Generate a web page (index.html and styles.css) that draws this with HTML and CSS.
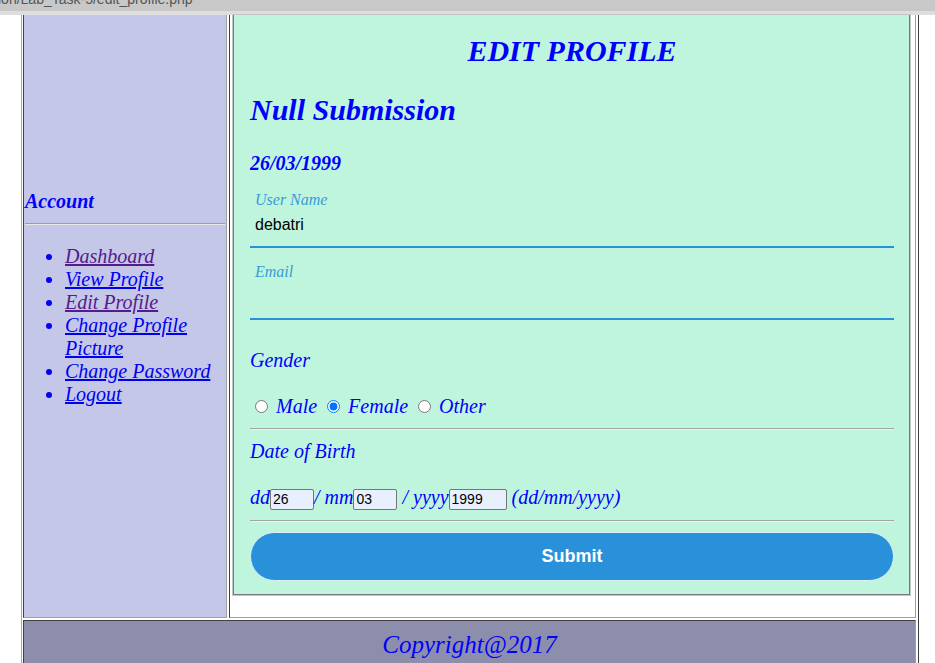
FILE: index.html
```html
<!DOCTYPE html>
<html lang="en">
<head>
<meta charset="utf-8">
<title>Edit Profile</title>
<link rel="stylesheet" href="styles.css">
</head>
<body>
<div class="urlbar"><div class="urltext">ion/Lab_Task-5/edit_profile.php</div></div>
<div class="urlstrip"></div>
<div class="page">
  <div class="frame">
    <aside class="cell side">
      <h4 class="side-title">Account</h4>
      <hr class="side-rule">
      <ul class="menu">
        <li><a href="#" class="visited">Dashboard</a></li>
        <li><a href="#">View Profile</a></li>
        <li><a href="#" class="visited">Edit Profile</a></li>
        <li><a href="#">Change Profile Picture</a></li>
        <li><a href="#">Change Password</a></li>
        <li><a href="#">Logout</a></li>
      </ul>
    </aside>
    <main class="cell content">
      <div class="panel">
        <h2 class="title">EDIT PROFILE</h2>
        <h2 class="null">Null Submission</h2>
        <h4 class="date">26/03/1999</h4>
        <div class="field first">
          <label class="flabel">User Name</label>
          <input class="finput" type="text" value="debatri">
        </div>
        <div class="field">
          <label class="flabel">Email</label>
          <input class="finput" type="text" value="">
        </div>
        <div class="gender">Gender</div>
        <div class="radios"><input type="radio" name="g" class="radio"> Male <input type="radio" name="g" class="radio" checked> Female <input type="radio" name="g" class="radio"> Other</div>
        <hr class="rule">
        <div class="dob">Date of Birth</div>
        <div class="daterow">dd<input class="dinput w44" type="text" value="26">/ mm<input class="dinput w44" type="text" value="03"> / yyyy<input class="dinput w58" type="text" value="1999"> (dd/mm/yyyy)</div>
        <hr class="rule">
        <button class="submit" type="button">Submit</button>
      </div>
    </main>
    <footer class="cell foot">Copyright@2017</footer>
  </div>
</div>
</body>
</html>
```
FILE: styles.css
```css
html, body {
  margin: 0;
  padding: 0;
  overflow: hidden;
  background: #ffffff;
}
body {
  width: 935px;
  height: 663px;
  font-family: "Liberation Serif", "Times New Roman", serif;
  font-size: 20px;
}
.urlbar {
  height: 11px;
  background: #c8c8c8;
  overflow: hidden;
}
.urltext {
  font-family: "Liberation Sans", Arial, sans-serif;
  font-size: 14px;
  line-height: 16px;
  color: #555555;
  margin: -9px 0 0 -2px;
  white-space: nowrap;
}
.urlstrip {
  height: 4px;
  background: #dedede;
}
.page {
  padding-left: 21px;
}
.frame {
  width: 898px;
  box-sizing: border-box;
  display: grid;
  grid-template-columns: 204px 687px;
  grid-template-rows: 603px 70px;
  gap: 2px;
  padding: 0 2px 2px 1px;
  border-left: 1px solid #a8a8a8;
  border-right: 1px solid #404040;
}
.cell {
  box-sizing: border-box;
  border-style: solid;
  border-width: 0 1px 1px 1px;
  border-color: #404040 #a0a0a0 #a0a0a0 #404040;
}
.side {
  background: #c4c7e8;
  padding: 175px 1px 0;
  color: #0000ff;
  font-style: italic;
}
.side-title {
  margin: 0;
  font-size: 20px;
  line-height: 23px;
  font-weight: bold;
}
.side-rule {
  margin: 10px 0 0;
  height: 0;
  border: none;
  border-top: 1px solid #9e9e9e;
  border-bottom: 1px solid #e6e6e6;
}
.menu {
  margin: 20px 0 0;
  padding-left: 40px;
  line-height: 23px;
}
.menu a {
  color: #0000ee;
  text-decoration: underline;
}
.menu a.visited {
  color: #551a8b;
}
.content {
  background: #ffffff;
  padding: 0 5px 0 3px;
}
.panel {
  display: flow-root;
  background: #bff5dc;
  border: 1px solid #7a7a7a;
  border-top: none;
  box-shadow: 0 0 0 1px #c4c4c4;
  padding: 0 15px 13px 16px;
  color: #0000ff;
  font-style: italic;
}
.title, .null {
  font-size: 30px;
  line-height: 34px;
  font-weight: bold;
  margin: 24px 0 0;
}
.title {
  text-align: center;
  margin-top: 19px;
}
.null {
  margin-top: 25px;
}
.date {
  font-size: 20px;
  line-height: 23px;
  font-weight: bold;
  margin: 25px 0 0;
}
.field {
  margin-top: 15px;
}
.field.first {
  margin-top: 16px;
}
.flabel {
  display: block;
  font-size: 16px;
  line-height: 18px;
  padding-left: 5px;
  color: #3b9ad9;
}
.finput {
  display: block;
  width: 100%;
  height: 39px;
  box-sizing: border-box;
  margin: 0;
  border: none;
  border-bottom: 2px solid #2891d8;
  background: transparent;
  padding: 7px 5px 12px;
  font-family: "Liberation Sans", Arial, sans-serif;
  font-size: 16px;
  line-height: 18px;
  font-style: normal;
  color: #000000;
  outline: none;
}
.gender {
  margin-top: 29px;
  line-height: 23px;
}
.radios {
  margin-top: 23px;
  line-height: 23px;
}
.radio {
  width: 13px;
  height: 13px;
  margin: 3px 3px 0 5px;
}
.rule {
  margin: 10px 0 0;
  height: 0;
  border: none;
  border-top: 1px solid #a3a3a3;
  border-bottom: 1px solid #e4f7ee;
}
.dob {
  margin-top: 10px;
  line-height: 23px;
}
.daterow {
  margin-top: 23px;
  height: 24px;
  line-height: 23px;
}
.dinput {
  box-sizing: border-box;
  height: 21px;
  margin: 0;
  padding: 0 2px;
  border: 1px solid #767676;
  border-radius: 2px;
  background: #e8f0fe;
  font-family: "Liberation Sans", Arial, sans-serif;
  font-size: 14px;
  font-style: normal;
  color: #000000;
  vertical-align: baseline;
}
.w44 { width: 44px; }
.w58 { width: 58px; }
.submit {
  display: block;
  width: 100%;
  height: 49px;
  margin-top: 10px;
  border: 1px solid #dcf0fa;
  border-radius: 25px;
  background: #2991d9;
  color: #ffffff;
  font-family: "Liberation Sans", Arial, sans-serif;
  font-size: 18px;
  font-weight: bold;
  padding: 0;
}
.foot {
  grid-column: 1 / 3;
  border-width: 1px 1px 0 1px;
  background: #8c8eab;
  color: #0000ff;
  font-style: italic;
  font-size: 25px;
  line-height: 29px;
  text-align: center;
  padding-top: 9px;
}
```
